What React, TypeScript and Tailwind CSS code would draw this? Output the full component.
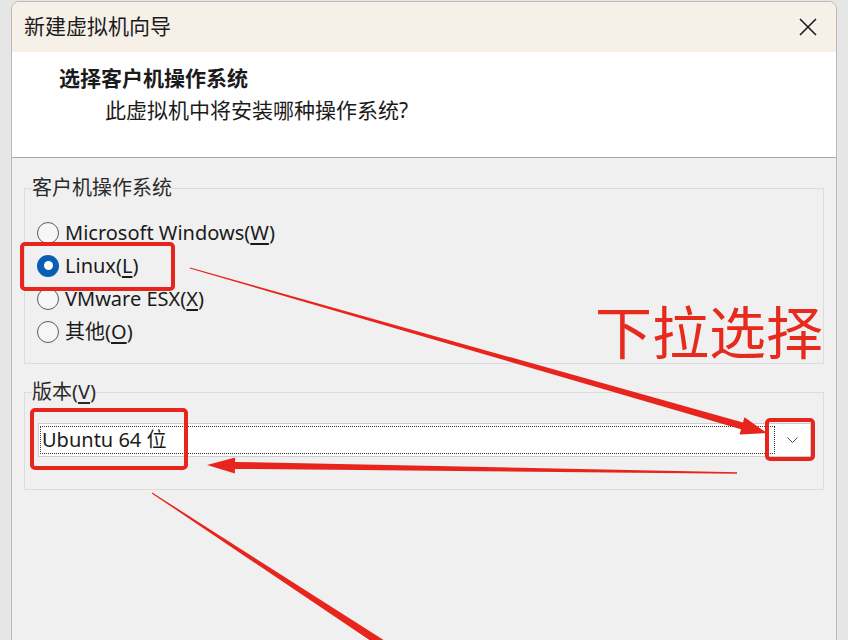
import React from 'react'

type Pt = [number, number]

// tapered annotation arrow, thin at the start and thick near the head
function arrowPoints(a: Pt, b: Pt, w1: number, w2: number, headLen: number, headHalf: number) {
  const dx = b[0] - a[0]
  const dy = b[1] - a[1]
  const len = Math.hypot(dx, dy)
  const ux = dx / len
  const uy = dy / len
  const nx = -uy
  const ny = ux
  const bx = b[0] - ux * headLen
  const by = b[1] - uy * headLen
  const pts: Pt[] = [
    [a[0] + (nx * w1) / 2, a[1] + (ny * w1) / 2],
    [bx + (nx * w2) / 2, by + (ny * w2) / 2],
  ]
  if (headLen > 0) {
    pts.push([bx + nx * headHalf, by + ny * headHalf], [b[0], b[1]], [bx - nx * headHalf, by - ny * headHalf])
  }
  pts.push([bx - (nx * w2) / 2, by - (ny * w2) / 2], [a[0] - (nx * w1) / 2, a[1] - (ny * w1) / 2])
  return pts.map((p) => p.join(',')).join(' ')
}

function Radio({ checked, label, mnemonic }: { checked?: boolean; label: string; mnemonic: string }) {
  return (
    <div className="flex h-[33px] items-center gap-[6px]">
      {checked ? (
        <span className="flex h-[22px] w-[22px] items-center justify-center rounded-full bg-[#0a5db5]">
          <span className="h-[9px] w-[9px] rounded-full bg-white" />
        </span>
      ) : (
        <span className="h-[22px] w-[22px] rounded-full border border-[#5c5c5c] bg-[#f6f6f6]" />
      )}
      <span>
        {label}(<span className="underline underline-offset-[3px]">{mnemonic}</span>)
      </span>
    </div>
  )
}

export default function App() {
  return (
    <div
      className="relative h-[640px] w-[848px] overflow-hidden bg-[#e6e6e6] pl-[11px] pt-[1px] text-[20px] text-[#1b1b1b]"
      style={{ fontFamily: '"Noto Sans", "Noto Sans CJK SC", sans-serif' }}
    >
      <div className="flex h-[660px] w-[826px] flex-col overflow-hidden rounded-t-[8px] border border-[#b9b9b9] bg-[#f0f0f0]">
        <div className="flex h-[50px] items-center justify-between bg-[#f6f0e9] pl-[12px] pr-[19px]">
          <span className="text-[21px]">新建虚拟机向导</span>
          <svg width="18" height="18" viewBox="0 0 18 18" stroke="#1b1b1b" strokeWidth="1.6">
            <path d="M1 1 17 17M17 1 1 17" />
          </svg>
        </div>
        <div className="h-[106px] border-b border-[#a9a9a9] bg-white pt-[11px]">
          <div className="pl-[47px] text-[21px] font-bold leading-[30px]">选择客户机操作系统</div>
          <div className="pl-[93px] text-[21px] leading-[34px]">此虚拟机中将安装哪种操作系统?</div>
        </div>
        <div className="px-[12px]">
          <fieldset className="mt-[18px] border border-[#dcdcdc] pb-[15px] pl-[12px] pt-[16px]">
            <legend className="-ml-[5px] text-[20px] leading-[24px] text-[#2a2a2a]">客户机操作系统</legend>
            <Radio label="Microsoft Windows" mnemonic="W" />
            <Radio checked label="Linux" mnemonic="L" />
            <Radio label="VMware ESX" mnemonic="X" />
            <Radio label="其他" mnemonic="O" />
          </fieldset>
          <fieldset className="mt-[16px] border border-[#dcdcdc] pb-[32px] pl-[13px] pr-[12px] pt-[19px]">
            <legend className="-ml-[6px] text-[20px] leading-[24px] text-[#2a2a2a]">
              版本(<span className="underline underline-offset-[3px]">V</span>)
            </legend>
            <div className="flex h-[34px] border border-[#cdcdcd] bg-white py-[2px] pl-[1px]">
              <div className="flex flex-1 items-center border border-dotted border-[#3a3a3a] pl-[1px] text-[20px]">
                Ubuntu 64 位
              </div>
              <div className="flex w-[35px] items-center justify-center">
                <svg width="11" height="6" viewBox="0 0 11 6" fill="none" stroke="#555" strokeWidth="1">
                  <path d="M0.5 0.5 5.5 5.5 10.5 0.5" />
                </svg>
              </div>
            </div>
          </fieldset>
        </div>
      </div>

      {/* red annotations drawn over the dialog */}
      <div className="pointer-events-none absolute left-[20px] top-[242px] h-[49px] w-[155px] rounded-[5px] border-[4px] border-[#e8251d]" />
      <div className="pointer-events-none absolute left-[30px] top-[408px] h-[62px] w-[158px] rounded-[5px] border-[4px] border-[#e8251d]" />
      <div className="pointer-events-none absolute left-[765px] top-[418px] h-[43px] w-[50px] rounded-[5px] border-[4px] border-[#e8251d]" />
      <div className="pointer-events-none absolute left-[595px] top-[304px] text-[57px] leading-none text-[#e62a1e]">下拉选择</div>
      <svg className="pointer-events-none absolute inset-0" width="848" height="640" viewBox="0 0 848 640">
        <g fill="#e8251d">
          <polygon points={arrowPoints([190, 268], [767, 433], 1, 7, 26, 9)} />
          <polygon points={arrowPoints([737, 473], [207, 465], 1.5, 7, 28, 8)} />
          <polygon points={arrowPoints([152, 493], [384, 645], 1, 8, 0, 0)} />
        </g>
      </svg>
    </div>
  )
}
